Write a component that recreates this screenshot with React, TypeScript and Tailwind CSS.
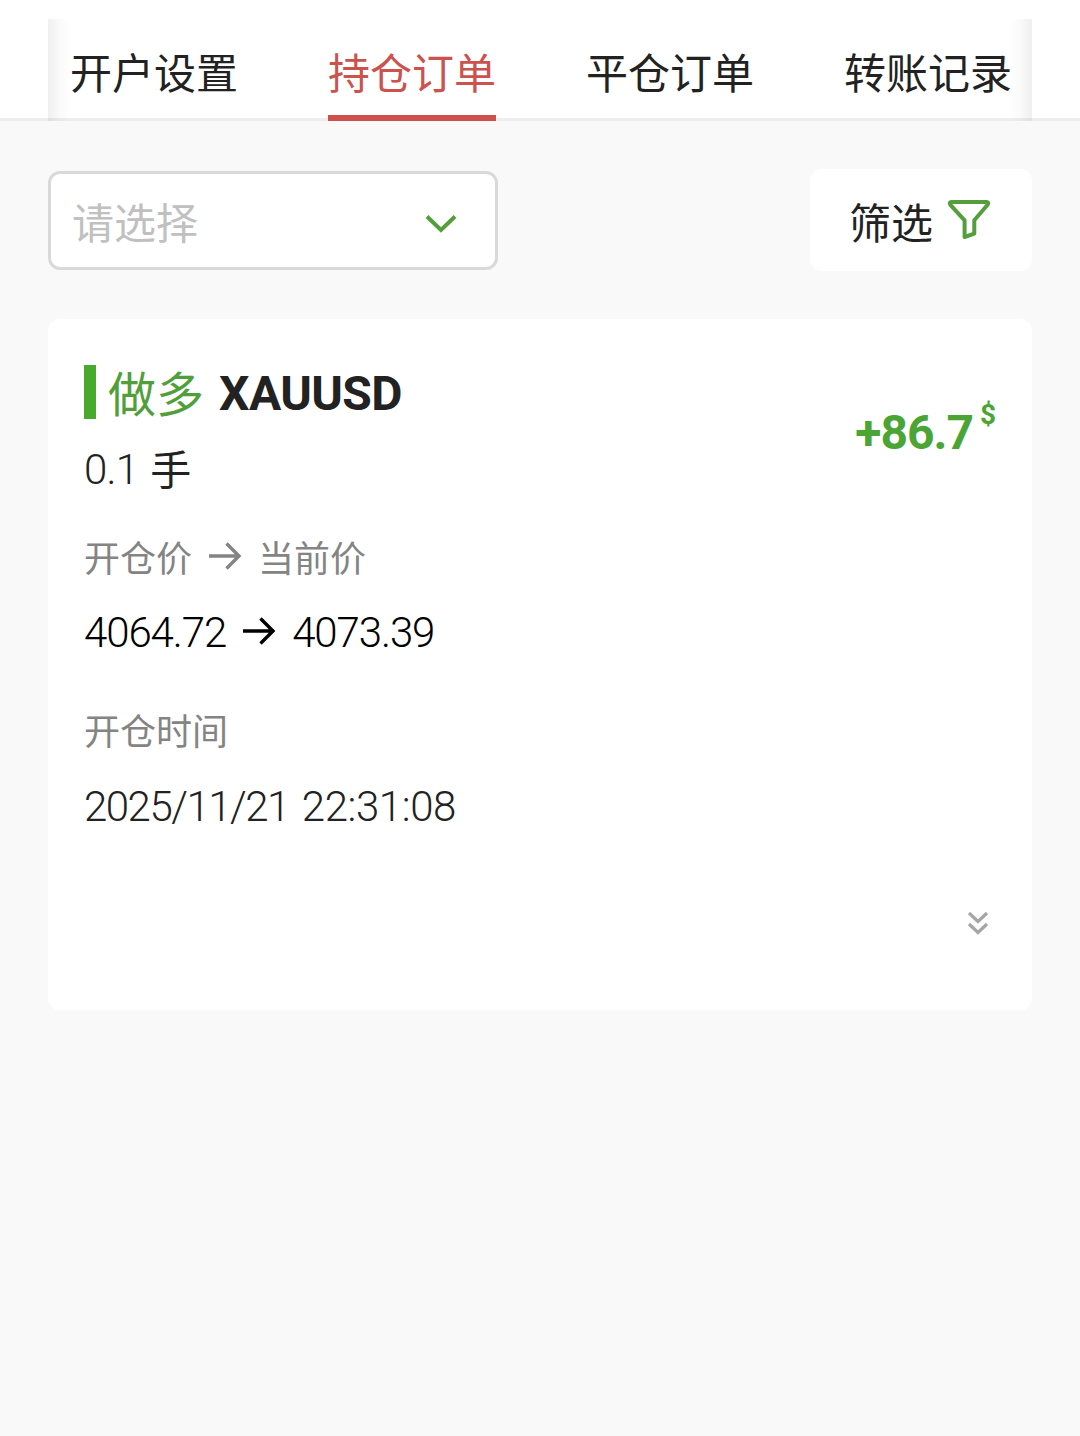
const TABS = ['开户设置', '持仓订单', '平仓订单', '转账记录']

const POSITION = {
  side: '做多',
  symbol: 'XAUUSD',
  lots: '0.1',
  openPrice: '4064.72',
  currentPrice: '4073.39',
  openDate: '2025/11/21',
  openTime: '22:31:08',
  profit: '+86.7',
}

function Arrow() {
  return (
    <svg width="34" height="28" viewBox="0 0 34 28" fill="none" stroke="currentColor" strokeWidth="3.4" className="shrink-0 mb-0.5">
      <path d="M1 14H31M18.5 1.5L31 14L18.5 26.5" />
    </svg>
  )
}

function TabBar({ active }: { active: string }) {
  return (
    <header className="h-[121px] bg-white border-b-[3px] border-[#eeeeee] px-12 pt-[19px]">
      <nav className="relative h-[102px] flex gap-[90px] px-[22px]">
        {TABS.map(tab => (
          <button
            key={tab}
            className={`h-[102px] w-[168px] shrink-0 pt-4 text-[42px] leading-[80px] whitespace-nowrap ${
              tab === active
                ? 'text-[#cb524d] border-b-[6px] border-[#cf4f4c]'
                : 'text-[#222222] border-b-[6px] border-transparent'
            }`}
          >
            {tab}
          </button>
        ))}
        {/* Scroll edge shadows */}
        <span className="absolute left-0 top-0 w-6 h-[102px] bg-linear-to-r from-black/6 via-black/2 to-transparent" />
        <span className="absolute right-0 top-0 w-6 h-[102px] bg-linear-to-l from-black/6 via-black/2 to-transparent" />
      </nav>
    </header>
  )
}

function Toolbar() {
  return (
    <div className="flex items-center justify-between">
      <button className="w-[450px] h-[99px] flex items-center justify-between bg-white border-[3px] border-[#d9d9d9] rounded-xl pl-[21px] pr-[38px]">
        <span className="pt-2.5 text-[42px] leading-none text-[#c0c0c0]">请选择</span>
        <svg width="32" height="20" viewBox="0 0 32 20" fill="none" stroke="#549f3c" strokeWidth="4" className="mt-[7px]">
          <path d="M2 2.5L16 16L30 2.5" />
        </svg>
      </button>

      <button className="w-[222px] h-[102px] flex items-center bg-white rounded-xl pl-[39px]">
        <span className="pt-2.5 text-[42px] leading-none text-[#222222]">筛选</span>
        <svg
          width="44"
          height="42"
          viewBox="0 0 44 42"
          fill="none"
          stroke="#549f3c"
          strokeWidth="4"
          strokeLinejoin="round"
          className="ml-3.5"
        >
          <path d="M4.3 3H39.7Q42.2 3.4 40.6 5.8L27.3 21.3V34.6L17.6 38V21.3L3.4 5.8Q1.8 3.4 4.3 3Z" />
        </svg>
      </button>
    </div>
  )
}

function PositionCard() {
  return (
    <section className="mt-12 h-[691px] bg-white rounded-xl px-9 pt-[46px] flex flex-col text-[#222222]">
      <div className="flex justify-between">
        <div>
          <div className="h-[54px] flex items-center">
            <span className="w-3 h-[54px] bg-[#48a92d]" />
            <span className="ml-3 pt-2 text-[48px] leading-[54px] text-[#519f3a]">{POSITION.side}</span>
            <span className="ml-[15px] pt-1 text-[48px] leading-[54px] font-bold tracking-[-0.6px]">{POSITION.symbol}</span>
          </div>
          <div className="mt-[25px] h-[50px] flex items-center text-[42px] leading-[50px]">
            <span className="pt-0.5 font-light tracking-[-0.8px]">{POSITION.lots}</span>
            <span className="ml-3 pt-1 text-[41px]">手</span>
          </div>
        </div>

        <div className="mt-9 flex items-start text-[#4ba534] font-bold">
          <span className="text-[48px] leading-[64px] tracking-[-1px]">{POSITION.profit}</span>
          <span className="ml-[7px] text-[28px] leading-7">$</span>
        </div>
      </div>

      <div className="mt-[41px] h-11 flex items-center gap-4 text-[36px] leading-[44px] text-[#848484]">
        <span className="pt-1.5">开仓价</span>
        <Arrow />
        <span className="pt-1.5">当前价</span>
      </div>
      <div className="mt-7 h-[50px] flex items-center gap-4 text-[42px] leading-[50px] font-light tracking-[-1.1px] text-black">
        <span className="pt-0.5">{POSITION.openPrice}</span>
        <Arrow />
        <span className="pt-0.5">{POSITION.currentPrice}</span>
      </div>

      <div className="mt-[54px] h-[42px] text-[36px] leading-[44px] text-[#848484]">开仓时间</div>
      <div className="mt-[29px] h-[50px] flex gap-[13px] text-[42px] leading-[50px] font-light">
        <span className="tracking-[-1.5px]">{POSITION.openDate}</span>
        <span className="tracking-[-0.4px]">{POSITION.openTime}</span>
      </div>

      {/* Expand details */}
      <button className="mt-[79px] self-end mr-[7px]">
        <svg width="22" height="24" viewBox="0 0 22 24" fill="none" stroke="#a6a6a6" strokeWidth="3.2">
          <path d="M2 2L11 10.5L20 2M2 13L11 21.5L20 13" />
        </svg>
      </button>
    </section>
  )
}

export default function App() {
  return (
    <div className="w-[1080px] min-h-[1436px] bg-[#f9f9f9] font-[Roboto,'Noto_Sans_CJK_SC',sans-serif]">
      <TabBar active="持仓订单" />
      <main className="px-12 pt-12">
        <Toolbar />
        <PositionCard />
      </main>
    </div>
  )
}
